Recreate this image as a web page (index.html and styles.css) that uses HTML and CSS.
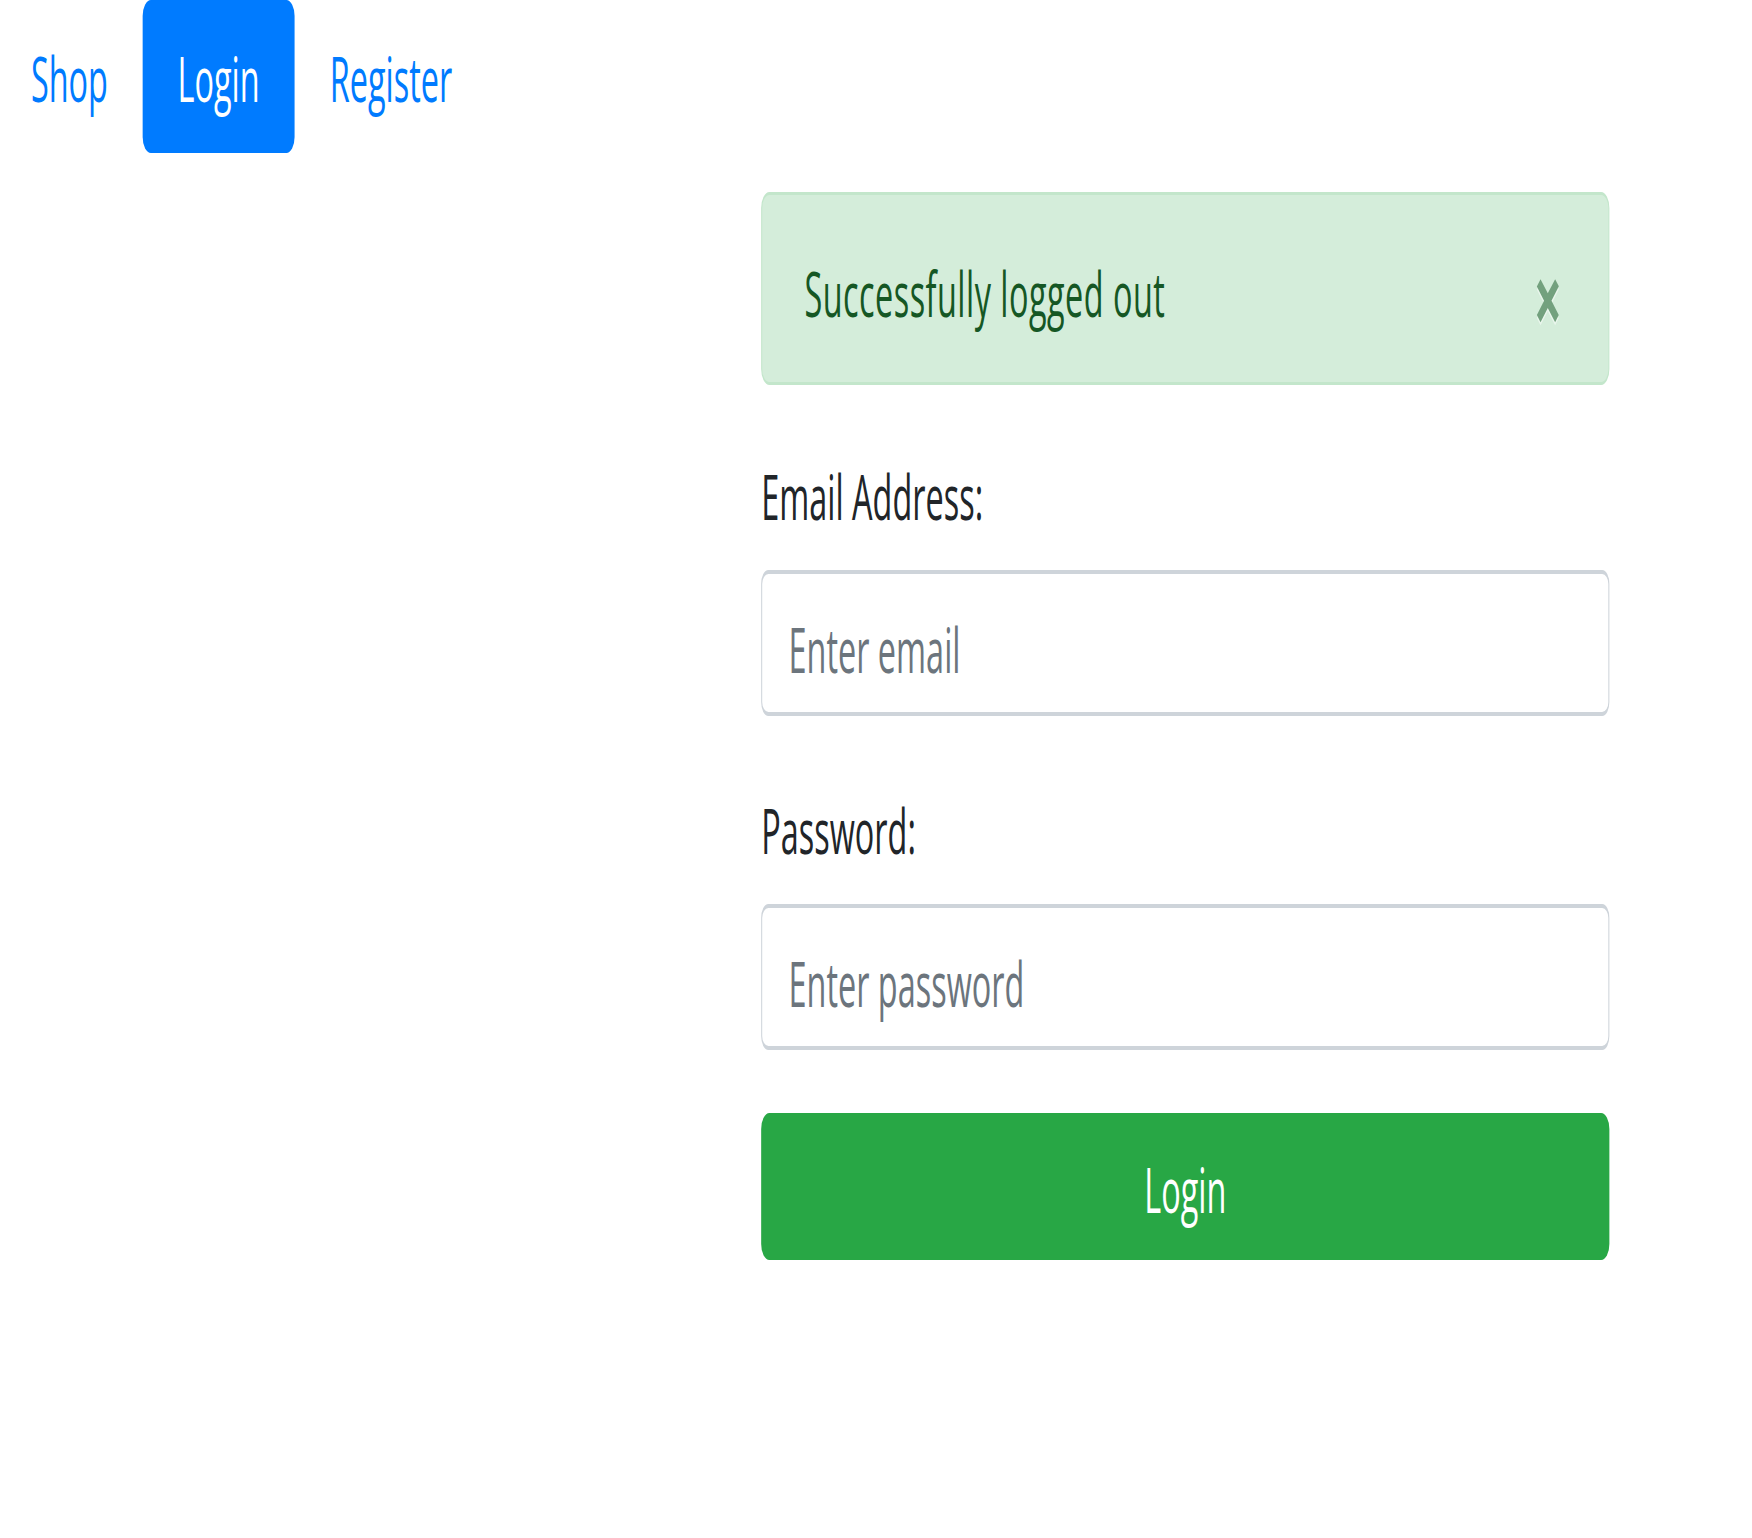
FILE: index.html
```html
<!DOCTYPE html>
<html lang="en">
<head>
<meta charset="utf-8">
<title>Login</title>
<link rel="stylesheet" href="styles.css">
</head>
<body>
<div class="viewport">
  <div class="page">
    <nav class="nav">
      <a class="nav-link" href="#">Shop</a>
      <a class="nav-link active" href="#">Login</a>
      <a class="nav-link" href="#">Register</a>
    </nav>
    <main class="content">
      <div class="alert">
        <span class="alert-text">Successfully logged out</span>
        <span class="close">&times;</span>
      </div>
      <form class="form">
        <div class="form-group">
          <label class="label" for="email">Email Address:</label>
          <input class="input" id="email" type="email" placeholder="Enter email">
        </div>
        <div class="form-group">
          <label class="label" for="password">Password:</label>
          <input class="input" id="password" type="password" placeholder="Enter password">
        </div>
        <button class="btn" type="button">Login</button>
      </form>
    </main>
  </div>
</div>
</body>
</html>
```
FILE: styles.css
```css
html, body {
  margin: 0;
  padding: 0;
  overflow: hidden;
  background: #fff;
}
body {
  font-family: "Open Sans", "Noto Sans", sans-serif;
  font-size: 63px;
  line-height: 92px;
  color: #212529;
}
.viewport {
  width: 1752px;
  height: 1538px;
  overflow: hidden;
}
.page {
  width: 3402px;
  height: 1538px;
  transform: scaleX(0.515);
  transform-origin: 0 0;
}
.nav {
  display: flex;
  height: 153px;
}
.nav-link {
  display: block;
  padding: 32px 68px 29px;
  color: #007bff;
  text-decoration: none;
  border-radius: 16px;
}
.nav-link:first-child {
  padding-left: 60px;
  padding-right: 67px;
}
.nav-link.active {
  background: #007bff;
  color: #fff;
}
.content {
  padding-left: 1478px;
  width: 1647px;
}
.alert {
  margin-top: 39px;
  height: 193px;
  box-sizing: border-box;
  display: flex;
  align-items: center;
  justify-content: space-between;
  padding: 0 90px 0 82px;
  background: #d4edda;
  border: solid #c3e6cb;
  border-width: 3px 2px;
  border-radius: 16px;
  color: #155724;
}
.alert-text {
  padding-top: 8px;
  letter-spacing: 0.9px;
}
.close {
  padding-top: 18px;
  font-size: 96px;
  font-weight: 700;
  line-height: 1;
  color: #155724;
  opacity: 0.5;
  text-shadow: 0 3px 0 #fff;
}
.form {
  margin-top: 65px;
}
.form-group {
  margin-bottom: 68px;
}
.label {
  display: block;
  margin-bottom: 28px;
}
.input {
  display: block;
  box-sizing: border-box;
  width: 100%;
  height: 146px;
  padding: 10px 51px 0;
  font-family: inherit;
  font-size: 63px;
  color: #495057;
  background: #fff;
  border: solid #ced4da;
  border-width: 4px 2px;
  border-radius: 14px;
  outline: none;
}
.input::placeholder {
  color: #6c757d;
  opacity: 1;
}
.btn {
  display: block;
  width: 100%;
  height: 147px;
  margin-top: -5px;
  padding: 4px 0 0;
  font-family: inherit;
  font-size: 63px;
  line-height: 92px;
  color: #fff;
  background: #28a745;
  border: 0;
  border-radius: 16px;
}
```
